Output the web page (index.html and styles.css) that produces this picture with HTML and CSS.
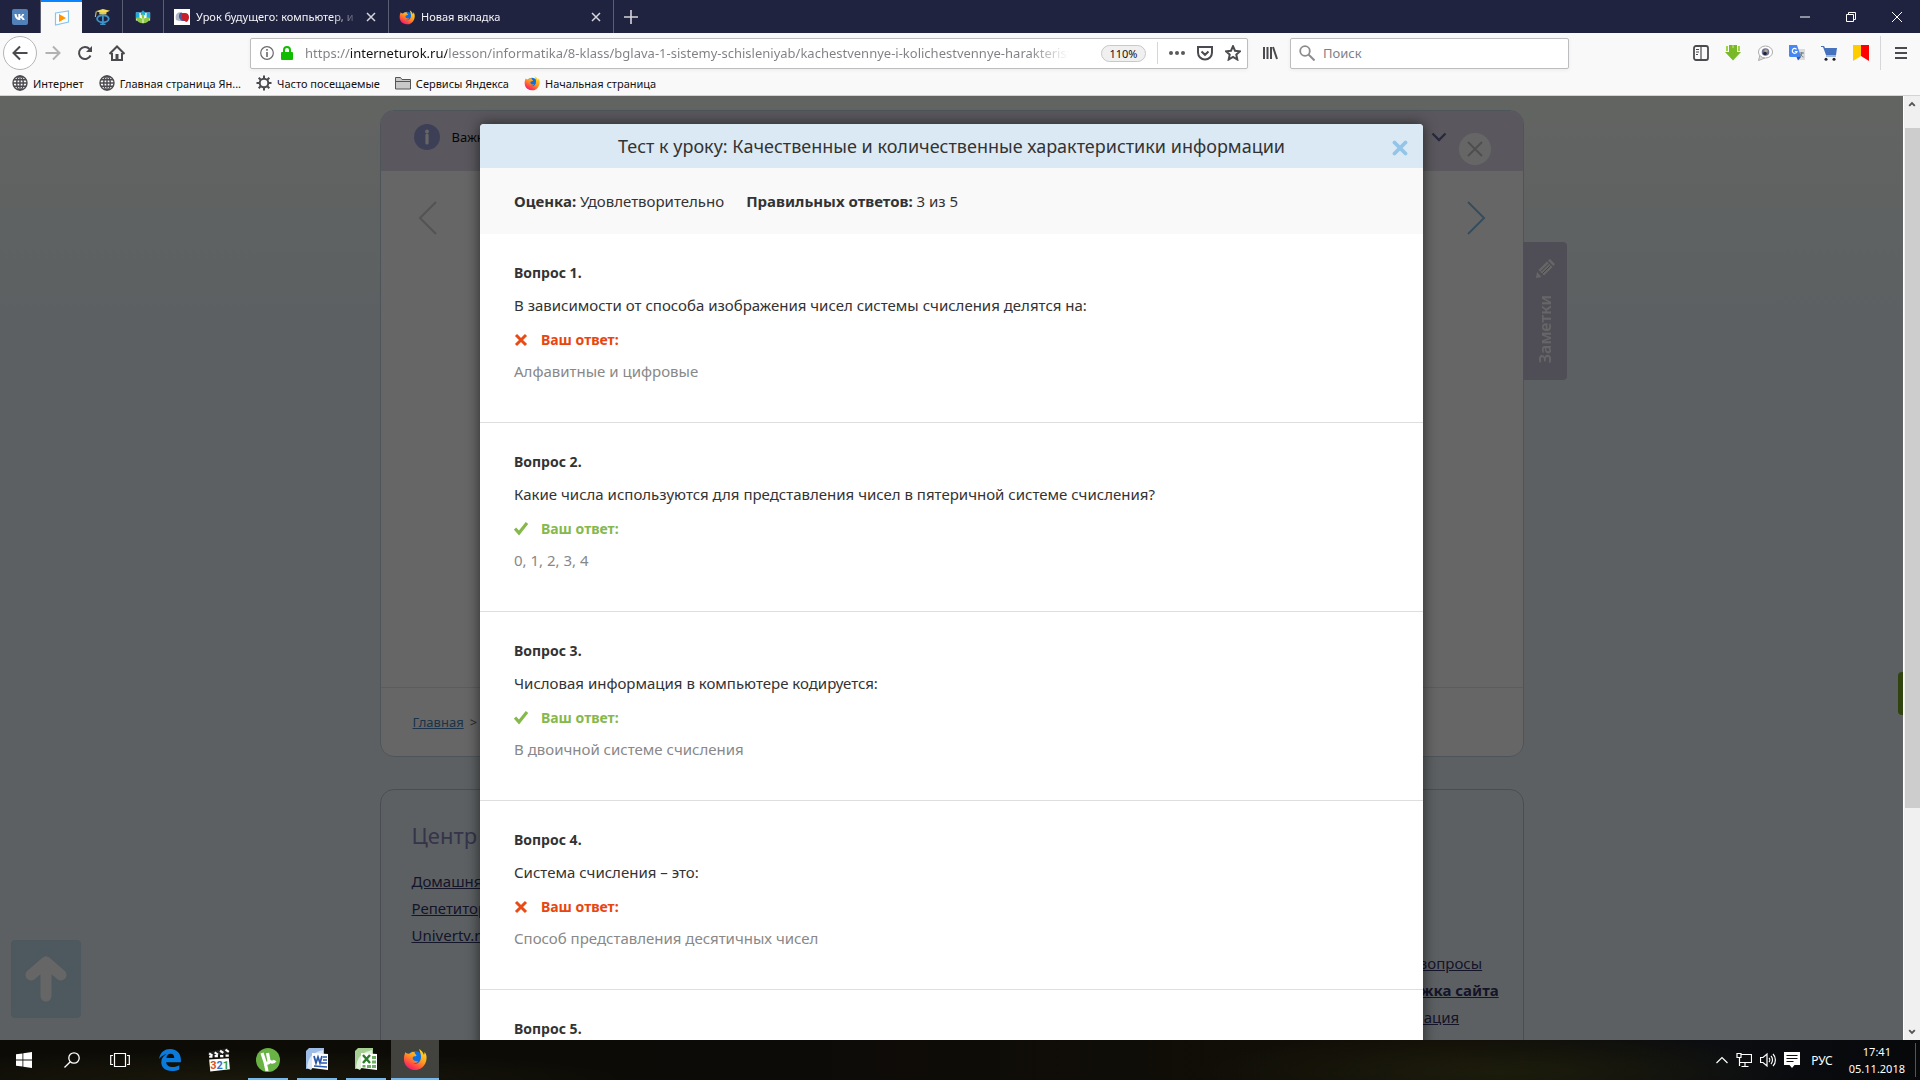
FILE: index.html
```html
<!DOCTYPE html>
<html lang="ru">
<head>
<meta charset="utf-8">
<title>Тест к уроку</title>
<link rel="stylesheet" href="styles.css">
</head>
<body>
<svg width="0" height="0" class="defs" aria-hidden="true">
  <defs>
    <linearGradient id="fxg" x1="0.8" y1="0" x2="0.2" y2="1"><stop offset="0" stop-color="#ffe226"/><stop offset=".45" stop-color="#ff9a1e"/><stop offset=".8" stop-color="#ff3a4e"/><stop offset="1" stop-color="#e31587"/></linearGradient>
    <symbol id="firefox" viewBox="0 0 24 24">
      <circle cx="12" cy="12.500" r="8.500" fill="#0a6fe0"/>
      <path d="M2.500 5c-3 7-1.500 13 3 16 6 4 14 2 17-5 2-5 1-9-1-11 0 1 0 2-.5 3-1-3-3-5-5-6 1 3 2 5 2 8 0 5-4 8-8 6.500 3 0 4.500-1 5-2.500-2 .5-3.500 0-4.500-1-1.500-1.500-1-3.500 1-3.800 1 0 2 0 2-1-.8-1-2-1.500-1.800-3-2-.5-4 .3-5 1.300C5 7 3 6.500 2.500 5z" fill="url(#fxg)"/>
    </symbol>
    <symbol id="globe" viewBox="0 0 16 16"><g fill="none" stroke="#4a4a4f" stroke-width="1.400"><circle cx="8" cy="8" r="7"/><ellipse cx="8" cy="8" rx="3.300" ry="7"/><path d="M8 1v14M1 8h14M2 4.800h12M2 11.200h12"/></g></symbol>
    <symbol id="cross" viewBox="0 0 14 14"><path d="M2 2l10 10M12 2L2 12" fill="none" stroke="#e94b16" stroke-width="3"/></symbol>
    <symbol id="tick" viewBox="0 0 14 14"><path d="M1 6.500l4 4.500L13 1" fill="none" stroke="#86b84c" stroke-width="3.200"/></symbol>
  </defs>
</svg>

<header class="browser">
  <div class="tabstrip">
    <button class="tab pinned" aria-label="VK"><svg viewBox="0 0 16 16" class="i16"><rect width="16" height="16" rx="2" fill="#5181b8"/><path d="M2.500 5h2c.2 2 1 3.300 1.800 3.700V5h2v2.300c1-.3 1.500-1.300 1.900-2.300h2c-.3 1.300-1.200 2.200-2 2.800.9.500 1.900 1.400 2.600 3.200h-2.200c-.4-1-1.200-1.800-2.300-2V11H8C5 11 2.700 9 2.500 5z" fill="#fff"/></svg></button>
    <button class="tab pinned active" aria-label="InternetUrok"><svg viewBox="0 0 16 16" class="i16"><path d="M1.500 3l13-2v11l-13 3z" fill="#fff" stroke="#86c5ef" stroke-width="1.200"/><path d="M5 4l7 4-7 4z" fill="#ff9500"/></svg></button>
    <button class="tab pinned" aria-label="Фоксфорд"><svg viewBox="0 0 18 18" class="i16"><path d="M10 6v12M7 17.200h6" stroke="#3e92c5" stroke-width="2"/><ellipse cx="10" cy="11" rx="6.500" ry="4" fill="none" stroke="#3e92c5" stroke-width="2.200"/><path d="M2 2.500L10 0l8 2-7 3z" fill="#f4dc55"/><path d="M6 3.500v2.500h8V3.500z" fill="#e6cf50"/><path d="M2.500 3L1.500 9" stroke="#d8c658" stroke-width="1.200"/></svg></button>
    <button class="tab pinned" aria-label="Якласс"><svg viewBox="0 0 18 16" class="i16"><path d="M1 3h16v9H1z" fill="#fff"/><path d="M1 3h4v6H1zM13 3h4v6h-4zM6.500 3L9 .500 11.500 3v3h-5z" fill="#1eacdd"/><path d="M1 9c4-1 6 0 8 2 2-2 4-3 8-2-1 4-4 6-8 6S2 13 1 9z" fill="#8fca43"/><path d="M9 4c-2 3-2 4 0 7 2-3 2-4 0-7z" fill="#8fca43"/><path d="M9 11v4" stroke="#fff"/></svg></button>
    <button class="tab"><svg viewBox="0 0 16 16" class="i16"><path fill="#fff" d="M0 0h16v16H0z"/><path d="M8 3C2 3 1 6 2 11c2 1 4 1 6 1z" fill="#b2b5c4"/><path d="M6 4c-2 3-1 6 2 8h3V4z" fill="#4757a0"/><path d="M8 5c3-2 7-1 7 3 0 2-1 5-3 5-1-2-4-1-4-4z" fill="#c8202a"/></svg><span class="tab-title">Урок будущего: компьютер, и</span><svg viewBox="0 0 10 10" class="tab-x"><path d="M1 1l8 8M9 1L1 9"/></svg></button>
    <button class="tab"><svg class="i16"><use href="#firefox"/></svg><span class="tab-title">Новая вкладка</span><svg viewBox="0 0 10 10" class="tab-x"><path d="M1 1l8 8M9 1L1 9"/></svg></button>
    <button class="newtab" aria-label="Открыть вкладку"><svg viewBox="0 0 14 14" class="i14"><path d="M7 0v14M0 7h14" stroke="#d5d5dc" stroke-width="1.600"/></svg></button>
    <div class="winctl">
      <button aria-label="Свернуть"><svg viewBox="0 0 10 10"><path d="M0 5h10"/></svg></button>
      <button aria-label="Окно"><svg viewBox="0 0 10 10"><path d="M.5 2.500h7v7h-7zM2.500 2.500v-2h7v7h-2"/></svg></button>
      <button aria-label="Закрыть"><svg viewBox="0 0 10 10"><path d="M0 0l10 10M10 0L0 10"/></svg></button>
    </div>
  </div>

  <div class="navbar">
    <button class="back" aria-label="Назад"><svg viewBox="0 0 16 16" class="i16 line"><path d="M15.500 8H1.500M8 1.500L1.500 8 8 14.500"/></svg></button>
    <button class="nav dim" aria-label="Вперёд"><svg viewBox="0 0 16 16" class="i16 line"><path d="M.5 8h14M8 1.500L14.500 8 8 14.500"/></svg></button>
    <button class="nav" aria-label="Обновить"><svg viewBox="0 0 16 16" class="i16 line"><path d="M13.500 10.500A6 6 0 1 1 12.500 4"/><path d="M15 1v6H9z" fill="#4a4a4f" stroke="none"/></svg></button>
    <button class="nav" aria-label="Домой"><svg viewBox="0 0 16 16" class="i16 line"><path d="M.5 9L8 1.500 15.500 9M3 8v7h10V8"/><path d="M6.500 9h3v6h-3z" fill="#4a4a4f" stroke="none"/></svg></button>
    <div class="urlbar">
      <svg viewBox="0 0 14 14" class="i14"><circle cx="7" cy="7" r="6.300" fill="none" stroke="#6a6a6e" stroke-width="1.200"/><path d="M7 6v5M7 3v1.800" stroke="#6a6a6e" stroke-width="1.600"/></svg>
      <svg viewBox="0 0 12 14" class="lock"><path d="M3 7V4a3 3 0 0 1 6 0v3" fill="none" stroke="#12bc00" stroke-width="2"/><rect y="6" width="12" height="8" rx="1" fill="#12bc00"/></svg>
      <input class="url" type="text" aria-label="Адрес" value="https://interneturok.ru/lesson/informatika/8-klass/bglava-1-sistemy-schisleniyab/kachestvennye-i-kolichestvennye-harakteristiki">
      <button class="zoom">110%</button>
      <span class="vsep"></span>
      <button class="nav" aria-label="Действия"><svg viewBox="0 0 16 16" class="i16"><g fill="#5a5a5e"><circle cx="2" cy="8" r="2"/><circle cx="8" cy="8" r="2"/><circle cx="14" cy="8" r="2"/></g></svg></button>
      <button class="nav" aria-label="Pocket"><svg viewBox="0 0 16 16" class="i16 line"><path d="M1 2h14v5.500a7 7 0 0 1-14 0zM4.500 6.500L8 9.800l3.500-3.300"/></svg></button>
      <button class="nav" aria-label="Закладка"><svg viewBox="0 0 16 16" class="i16 line"><path d="M8 1.200l2 4.500 5 .6-3.700 3.300 1 4.900L8 12l-4.300 2.500 1-4.900L1 6.300l5-.6z"/></svg></button>
    </div>
    <button class="nav" aria-label="Библиотека"><svg viewBox="0 0 16 16" class="i16 line"><path d="M2 2v12M5.500 2v12M9 2v12M11 2l4 12"/></svg></button>
    <label class="search"><svg viewBox="0 0 16 16" class="i16"><circle cx="6" cy="6" r="4.800" fill="none" stroke="#8c8c8c" stroke-width="1.800"/><path d="M9.500 9.500l6 6" stroke="#8c8c8c" stroke-width="2"/></svg><input type="text" placeholder="Поиск" aria-label="Поиск"></label>
    <div class="addons">
      <button aria-label="Боковая панель"><svg viewBox="0 0 16 16" class="i16"><rect x="1" y="1" width="14" height="14" rx="2" fill="none" stroke="#4a4a4f" stroke-width="1.800"/><path d="M8 1v14M3 4.500h3M3 7h3M3 9.500h2" stroke="#4a4a4f" stroke-width="1.200"/></svg></button>
      <button aria-label="Загрузки"><svg viewBox="0 0 16 16" class="i16"><path d="M4 0h8v7h4l-8 8.500L0 7h4z" fill="#79b928"/><path d="M1 1h2v5H1zM13 1h2v5h-2zM7 0h2v3H7z" fill="#9dd44a"/></svg></button>
      <button aria-label="Просмотр"><svg viewBox="0 0 16 16" class="i16"><path d="M3 10l-1.500 5.500L8 13" fill="#ddd" stroke="#aaa"/><ellipse cx="8.500" cy="7" rx="7" ry="6" fill="#fff" stroke="#aaa"/><circle cx="8.500" cy="7" r="3.800" fill="#6a7292"/><circle cx="9" cy="6" r="1.800" fill="#b8a08f"/><circle cx="8" cy="8.500" r="1.800" fill="#20253f"/></svg></button>
      <button aria-label="Переводчик"><svg viewBox="0 0 16 16" class="i16"><path d="M7 4h9v11H9z" fill="#dcdcdc"/><path d="M0 0h8l4 12H1.500A1.500 1.500 0 0 1 0 10.500z" fill="#4687f1"/><path d="M7.500 12h4.500L9 15.500z" fill="#2a55c7"/><path d="M7.500 4.300A2.400 2.400 0 1 0 8 6.500H5.800" fill="none" stroke="#fff" stroke-width="1.200"/><path d="M10.500 8h4.500M12.800 7v1c0 2-1 3-2 4M11.500 9c.5 1.500 1.500 2.500 3 3" fill="none" stroke="#697885"/></svg></button>
      <button aria-label="Корзина"><svg viewBox="0 0 16 16" class="i16"><path d="M0 1h3l1 2h12l-1 7H5L2 2H0z" fill="#4472bd"/><path d="M5 11h10" stroke="#4472bd"/><circle cx="5" cy="14.300" r="1.500" fill="#222"/><circle cx="13" cy="14.300" r="1.500" fill="#222"/></svg></button>
      <button aria-label="Закладки Яндекса"><svg viewBox="0 0 16 16" class="i16"><path d="M0 0h8v11l-8 5z" fill="#fc0"/><path d="M8 0h8v16l-8-5z" fill="#f00"/></svg></button>
    </div>
    <span class="vsep tall"></span>
    <button class="nav" aria-label="Меню"><svg viewBox="0 0 16 16" class="i16 line"><path d="M2 3h12M2 8h12M2 13h12"/></svg></button>
  </div>

  <nav class="bookmarks">
    <a href="#"><svg class="i16"><use href="#globe"/></svg>Интернет</a>
    <a href="#"><svg class="i16"><use href="#globe"/></svg>Главная страница Ян...</a>
    <a href="#"><svg viewBox="0 0 16 16" class="i16"><circle cx="8" cy="8" r="4.300" fill="none" stroke="#4a4a4f" stroke-width="2"/><path d="M8 .5v3M8 12.500v3M.5 8h3M12.500 8h3M2.700 2.700l2 2M11.300 11.300l2 2M13.300 2.700l-2 2M4.700 11.300l-2 2" stroke="#4a4a4f" stroke-width="2"/></svg>Часто посещаемые</a>
    <a href="#"><svg viewBox="0 0 16 16" class="i16"><path d="M.5 14V2.500h5L7 4.500h8.500V14z" fill="#c9c9c9" stroke="#555"/><path d="M1 6.500h14" stroke="#555"/></svg>Сервисы Яндекса</a>
    <a href="#"><svg class="i16"><use href="#firefox"/></svg>Начальная страница</a>
  </nav>
</header>

<main class="view">
  <div class="site">
    <div class="site-in">
      <section class="card">
        <div class="notice">
          <span class="info"><svg viewBox="0 0 26 26"><circle cx="13" cy="13" r="13" fill="#969dd6"/><path d="M13 11v8" stroke="#fff" stroke-width="3.200" stroke-linecap="round"/><circle cx="13" cy="7.500" r="1.900" fill="#fff"/></svg></span>
          <span class="notice-text">Важн</span>
          <svg viewBox="0 0 16 10" class="chev"><path d="M1.500 1.500L8 8l6.500-6.500" fill="none" stroke="#62669c" stroke-width="2.400"/></svg>
          <button class="round-x" aria-label="Скрыть"><svg viewBox="0 0 16 16" class="i16"><path d="M1 1l14 14M15 1L1 15" stroke="#c4c4c4" stroke-width="2"/></svg></button>
        </div>
        <div class="slider">
          <button class="arrow" aria-label="Назад"><svg viewBox="0 0 20 34"><path d="M18 1L2 17l16 16" stroke="#cfcfcf"/></svg></button>
          <button class="arrow" aria-label="Вперёд"><svg viewBox="0 0 20 34"><path d="M2 1l16 16L2 33" stroke="#86bfe6"/></svg></button>
        </div>
        <div class="crumbs"><a href="#">Главная</a><span>&gt;</span></div>
        <button class="notes"><svg viewBox="0 0 20 20"><path d="M1 19l1-6 4.500 5zM3.500 11L12 2.500l5.500 5.500L9 16.500zM13 1.500l2-1.500 5 5-1.500 2z" fill="#fff"/><path d="M6 12.500l8-8M7.500 14.500l8-8" stroke="#a9a7bd" stroke-width="1"/></svg><span>Заметки</span></button>
      </section>
      <footer class="foot">
        <div class="foot-col">
          <h2>Центр</h2>
          <a href="#">Домашняя школа</a>
          <a href="#">Репетиторы</a>
          <a href="#">Univertv.ru</a>
        </div>
        <div class="foot-col right">
          <a href="#">Частые вопросы</a>
          <a href="#" class="strong">Поддержка сайта</a>
          <a href="#">Информация</a>
        </div>
      </footer>
    </div>
    <button class="totop" aria-label="Наверх"><svg viewBox="0 0 42 46"><path d="M21 40V8M6 19L21 6l15 13" fill="none" stroke="#fff" stroke-width="11" stroke-linecap="round" stroke-linejoin="round"/></svg></button>
    <button class="side-tab" aria-label="Отзыв"></button>
  </div>

  <div class="overlay">
    <section class="modal" role="dialog" aria-labelledby="dlg">
      <div class="modal-head"><h1 id="dlg">Тест к уроку: Качественные и количественные характеристики информации</h1><button class="close" aria-label="Закрыть"><svg viewBox="0 0 16 16" class="i16"><path d="M2.500 2.500l11 11M13.500 2.500l-11 11" stroke="#93c5e8" stroke-width="3.800" stroke-linecap="round"/></svg></button></div>
      <div class="summary"><p><b>Оценка:</b> Удовлетворительно</p><p><b>Правильных ответов:</b> 3 из 5</p></div>
      <article class="q"><h3>Вопрос 1.</h3><p class="text">В зависимости от способа изображения чисел системы счисления делятся на:</p><p class="mark bad"><svg><use href="#cross"/></svg>Ваш ответ:</p><p class="reply">Алфавитные и цифровые</p></article>
      <article class="q"><h3>Вопрос 2.</h3><p class="text">Какие числа используются для представления чисел в пятеричной системе счисления?</p><p class="mark good"><svg><use href="#tick"/></svg>Ваш ответ:</p><p class="reply">0, 1, 2, 3, 4</p></article>
      <article class="q"><h3>Вопрос 3.</h3><p class="text">Числовая информация в компьютере кодируется:</p><p class="mark good"><svg><use href="#tick"/></svg>Ваш ответ:</p><p class="reply">В двоичной системе счисления</p></article>
      <article class="q"><h3>Вопрос 4.</h3><p class="text">Система счисления – это:</p><p class="mark bad"><svg><use href="#cross"/></svg>Ваш ответ:</p><p class="reply">Способ представления десятичных чисел</p></article>
      <article class="q"><h3>Вопрос 5.</h3></article>
    </section>
  </div>

  <div class="scroll" aria-hidden="true">
    <svg viewBox="0 0 17 17"><path d="M5.500 10l3-3 3 3" /></svg>
    <div class="track"><div class="thumb"></div></div>
    <svg viewBox="0 0 17 17"><path d="M5.500 7l3 3 3-3" /></svg>
  </div>
</main>

<footer class="taskbar">
  <button aria-label="Пуск"><svg viewBox="0 0 16 16" class="i16"><path d="M0 2.300l6.500-.9v6.100H0zM7.300 1.300L16 0v7.500H7.300zM0 8.500h6.500v6.100L0 13.700zM7.300 8.500H16V16l-8.700-1.300z" fill="#fff"/></svg></button>
  <button aria-label="Поиск"><svg viewBox="0 0 16 16" class="i16"><g fill="none" stroke="#fff" stroke-width="1.300"><circle cx="10" cy="6" r="5.200"/><path d="M6.300 9.700L.5 15.500"/></g></svg></button>
  <button aria-label="Представление задач"><svg viewBox="0 0 20 16" class="i20"><path d="M4.500 1.500h11v13h-11zM3 3.500H.7v9H3M17 3.500h2.300v9H17" fill="none" stroke="#fff" stroke-width="1.200"/></svg></button>
  <div class="apps">
    <button aria-label="Edge"><svg viewBox="-1 -1 22 22" class="i24"><path d="M0 9C1 3 5 0 10 0c6 0 10 4 10 10v2H6.500c.3 3 3 4.500 6 4.500 2.200 0 4.300-.6 6-1.600v3.700c-2 1-4.300 1.400-7 1.400-6 0-9.500-3.400-9.500-8 0-3.500 2-6 5-7.500C5 5 2.500 6 0 9zm6.700-.8h7.200c0-2.500-1.200-3.900-3.500-3.900-2 0-3.400 1.500-3.700 3.900z" fill="#0a7bdc"/></svg></button>
    <button aria-label="Media Player Classic"><svg viewBox="0 0 22 22" class="i24"><path d="M1 4l18-4 1 5L2 9z" fill="#222"/><path d="M2 5l3 2M7 4l3 2M12 2.500l3 2M17 1.500l3 2M2 8h3M7 7.500h3M12 7.500h3M17 7h3" stroke="#fff" stroke-width="2"/><path d="M2 10.500l18-1 1 10-18 2z" fill="#fff"/><text x="3" y="19" font-size="10" font-weight="700" font-family="Roboto, sans-serif"><tspan fill="#d4541d">3</tspan><tspan fill="#3477c9">2</tspan><tspan fill="#3a9b3b">1</tspan></text></svg></button>
    <button class="open" aria-label="uTorrent"><svg viewBox="0 0 24 24" class="i24"><circle cx="12" cy="12" r="12" fill="#69b345"/><path d="M6 5l3 9c.7 2 4.300 1.500 4-1l-1.500-8M13.500 12.500c1 2.500 4.500 2 5.500 0M9 14l2 9" fill="none" stroke="#fff" stroke-width="3.200"/></svg></button>
    <button class="open" aria-label="Word"><svg viewBox="0 0 24 24" class="i24"><path d="M1 3l3-3h15v18L1 21z" fill="#9dbce6"/><path d="M2 20C3 10 6 5 18 2v3L6 22z" fill="#d9e6f7"/><path d="M7 5l16 1v16L7 20z" fill="#fff"/><path d="M9 8l2 7 2-6 2 6 2-7" fill="none" stroke="#2c5aa8" stroke-width="1.800"/><path d="M18 9h4M18 12h4M16 15h6M9 18l13 1" stroke="#2c5aa8" stroke-width="1.400"/></svg></button>
    <button class="open" aria-label="Excel"><svg viewBox="0 0 24 24" class="i24"><path d="M1 3l3-3h15v18L1 21z" fill="#a5cf93"/><path d="M2 20C3 10 6 5 18 2v3L6 22z" fill="#e0f0d9"/><path d="M7 5l16 1v16L7 20z" fill="#fff"/><path d="M9 7l7 8M16 7l-7 8" fill="none" stroke="#2b7d2c" stroke-width="2.400"/><path d="M18 8h4v3h-4zM18 12.500h4v3h-4zM18 17h4v3h-4zM13 17h4v3h-4zM8.500 17h3v2.500h-3z" fill="#6fad63"/></svg></button>
    <button class="open current" aria-label="Firefox"><svg class="i24"><use href="#firefox"/></svg></button>
  </div>
  <div class="tray">
    <svg viewBox="0 0 12 16" class="t12"><path d="M.5 11L6 5.500l5.500 5.500"/></svg>
    <svg viewBox="0 0 16 16" class="i16"><path d="M5 2.500h10.500v8H3.500V6M1 1.500h4v4H1zM3.500 5v9M9 10.500v4M5.500 14.500h7"/></svg>
    <svg viewBox="0 0 16 16" class="i16"><path d="M.5 5.500H3L7 2v12l-4-3.500H.5zM9 6c1 1 1 3 0 4M11 4c2 2 2 6 0 8M13 2c3.200 3 3.200 9 0 12"/></svg>
    <svg viewBox="0 0 16 16" class="i16"><path d="M0 0h16v13h-5.500L8 16l-2.500-3H0z" fill="#fff" stroke="none"/><path d="M2.500 3.500h11M2.500 6.500h11M2.500 9.500h7" class="ink"/></svg>
    <span class="lang">РУС</span>
    <div class="clock"><span>17:41</span><span>05.11.2018</span></div>
  </div>
</footer>
</body>
</html>
```
FILE: styles.css
```css
* { box-sizing: border-box; }
html, body { height: 100%; }
body { margin: 0; display: flex; flex-direction: column; overflow: hidden; font-family: "Noto Sans", sans-serif; font-size: 12px; color: #111; }
button { border: 0; padding: 0; background: none; font: inherit; color: inherit; display: flex; align-items: center; justify-content: center; flex: none; }
input { border: 0; outline: 0; padding: 0; background: none; font: inherit; min-width: 0; }
h1, h2, h3, p { margin: 0; }
svg { flex: none; display: block; }
.defs { position: absolute; }
.i14 { width: 14px; height: 14px; }
.i16 { width: 16px; height: 16px; }
.i20 { width: 20px; height: 16px; }
.i24 { width: 24px; height: 24px; }
.line { fill: none; stroke: #4a4a4f; stroke-width: 2; }

/* browser chrome */
.browser { flex: none; background: #f9f9fa; border-bottom: 1px solid #d4d4d6; }
.tabstrip { display: flex; height: 33px; background: #202340; color: #f4f4f8; }
.tab { width: 225px; padding: 0 12px 0 10px; gap: 6px; border-right: 1px solid #5c5e74; }
.tab.pinned { width: 41px; padding: 0 12px; }
.tab.active { background: #f9f9fa; border-top: 2px solid #0a84ff; border-right: 0; }
.tab-title { flex: 1; min-width: 0; overflow: hidden; white-space: nowrap; text-align: left; font-size: 11px; -webkit-mask-image: linear-gradient(90deg, #000 calc(100% - 28px), transparent); mask-image: linear-gradient(90deg, #000 calc(100% - 28px), transparent); }
.tab-x { width: 10px; height: 10px; stroke: #d5d5dc; stroke-width: 1.500; }
.newtab { width: 34px; }
.winctl { margin-left: auto; display: flex; }
.winctl button { width: 46px; }
.winctl svg { width: 10px; height: 10px; fill: none; stroke: #fff; stroke-width: 1; }

.navbar { display: flex; align-items: center; height: 40px; padding: 0 3px; }
.back { width: 34px; height: 34px; border: 1px solid #b5b5b8; border-radius: 50%; background: #fff; }
.nav { width: 32px; height: 30px; }
.dim { opacity: .4; }
.urlbar { flex: 1; display: flex; align-items: center; height: 31px; margin: 0 6px 0 117px; padding: 0 0 0 9px; border: 1px solid #bdbdc0; border-radius: 2px; background: #fff; box-shadow: 0 1px 4px rgba(0,0,0,.06); }
.lock { width: 12px; height: 14px; margin-left: 7px; }
.url { flex: 1; margin: 0 32px 0 12px; font-size: 13px; color: transparent; background: linear-gradient(90deg, #7f7f84 46px, #111 46px 142px, #7f7f84 142px calc(100% - 40px), transparent); -webkit-background-clip: text; background-clip: text; }
.urlbar .nav { width: 28px; }
.zoom { width: 45px; height: 17px; border: 1px solid #c8c8ca; border-radius: 9px; background: #f0f0f1; font-size: 11px; }
.vsep { width: 1px; height: 22px; margin: 0 5px 0 11px; background: #d7d7db; }
.vsep.tall { height: 34px; margin: 0 4px 0 11px; }
.search { display: flex; align-items: center; gap: 8px; width: 279px; height: 31px; margin-left: 4px; padding: 0 8px; border: 1px solid #bdbdc0; border-radius: 2px; background: #fff; box-shadow: 0 1px 4px rgba(0,0,0,.06); }
.search input { font-size: 13px; }
.search input::placeholder { color: #808084; opacity: 1; }
.addons { display: flex; gap: 16px; margin-left: 124px; }
.bookmarks { display: flex; height: 22px; align-items: center; gap: 15px; padding: 0 12px 2px; font-size: 11px; }
.bookmarks a { display: flex; align-items: center; gap: 5px; color: #111; text-decoration: none; white-space: nowrap; }

/* page under the dialog */
.view { position: relative; flex: 1; min-height: 0; overflow: hidden; display: flex; }
.site { position: relative; flex: 1; min-width: 0; background: linear-gradient(#f6faf4, #e8f1f6 220px, #e7f1f6); }
.site-in { max-width: 1144px; margin: 0 auto; padding-top: 14px; }
.card { position: relative; border: 1px solid #c3d5e2; border-radius: 14px; background: #fff; }
.notice { display: flex; align-items: center; height: 60px; padding: 0 32px 8px 33px; border-radius: 13px 13px 0 0; background: #e1dceb; font-size: 13px; }
.info svg { width: 26px; height: 26px; }
.notice-text { margin-left: 12px; }
.chev { width: 16px; height: 10px; margin-left: auto; margin-right: 12px; }
.round-x { width: 32px; height: 32px; margin-top: 24px; border-radius: 50%; background: #fff; }
.slider { display: flex; justify-content: space-between; align-items: flex-start; height: 517px; padding: 30px 37px; border-bottom: 1px solid #e6e6e6; }
.arrow svg { width: 20px; height: 34px; fill: none; stroke-width: 2; }
.crumbs { display: flex; gap: 6px; align-items: center; height: 68px; padding: 0 32px; font-size: 13px; color: #666; }
.crumbs a { color: #4680b6; }
.notes { position: absolute; left: 100%; top: 131px; width: 44px; height: 138px; flex-direction: column; gap: 16px; border-radius: 0 4px 4px 0; background: #c6c3da; }
.notes svg { width: 20px; height: 20px; }
.notes span { writing-mode: vertical-rl; transform: rotate(180deg); font-size: 16px; font-weight: 600; color: #fff; }
.foot { display: flex; justify-content: space-between; margin-top: 32px; height: 400px; padding: 28px 0 0 31px; border: 1px solid #b9c0d0; border-radius: 14px; }
.foot-col { display: flex; flex-direction: column; align-items: flex-start; font-size: 15px; line-height: 27px; }
.foot-col.right { width: 160px; padding-top: 132px; }
.foot-col h2 { font-size: 22px; font-weight: 400; line-height: 34px; margin-bottom: 16px; color: #8582b9; }
.foot-col a { color: #35356a; white-space: nowrap; }
.strong { font-weight: 700; }
.totop { position: absolute; left: 11px; bottom: 22px; width: 70px; height: 78px; border-radius: 4px; background: #c1dbed; }
.totop svg { width: 42px; height: 46px; }
.side-tab { position: absolute; right: 0; top: 576px; width: 5px; height: 43px; border-radius: 4px 0 0 4px; background: #76a726; }

/* test results dialog */
.overlay { position: absolute; inset: 0 17px 0 0; padding-top: 28px; background: rgba(0,0,0,.6); color: #333; }
.modal { max-width: 943px; margin: 0 auto; background: #fff; border-radius: 4px 4px 0 0; box-shadow: 0 0 14px rgba(0,0,0,.6); }
.modal-head { display: flex; align-items: center; height: 44px; padding: 0 15px 0 31px; background: #dbe9f4; border-radius: 4px 4px 0 0; }
.modal-head h1 { flex: 1; font-size: 18px; font-weight: 400; text-align: center; }
.close { padding-top: 4px; }
.summary { display: flex; align-items: center; gap: 22px; height: 66px; padding: 0 34px; background: #f9f9f9; font-size: 15px; }
.q { padding: 29px 34px 41px; border-bottom: 1px solid #dedede; font-size: 15px; line-height: 20px; }
.q h3 { font-size: 14px; }
.text { margin: 12px 0 15px; }
.mark { display: flex; align-items: center; gap: 13px; font-size: 14px; font-weight: 700; }
.mark svg { width: 14px; height: 14px; }
.bad { color: #e8450f; }
.good { color: #86b84c; }
.reply { margin-top: 11px; color: #888; }

.scroll { width: 17px; display: flex; flex-direction: column; background: #f0f0f0; border-left: 1px solid #fff; }
.scroll svg { width: 16px; height: 17px; fill: none; stroke: #555; stroke-width: 2; }
.track { flex: 1; padding: 15px 0 0 1px; }
.thumb { height: 76%; background: #cdcdcd; }

/* taskbar */
.taskbar { flex: none; display: flex; height: 40px; color: #fff; background: radial-gradient(ellipse 300px 40px at 78% 80%, #1c1c0c, transparent), radial-gradient(ellipse 400px 30px at 12% 100%, #1a180b, transparent), linear-gradient(90deg, #0c0b06, #0d0b07 40%, #120f07 75%, #0b0d11 90%, #07080a); }
.taskbar button { width: 48px; }
.apps { display: flex; gap: 1px; margin-left: 2px; }
.taskbar .open { background: linear-gradient(#76b9ed, #76b9ed) bottom / 40px 2px no-repeat; }
.taskbar .current { background: #42423e; border-bottom: 2px solid #76b9ed; }
.tray { margin-left: auto; display: flex; align-items: center; gap: 8px; padding-right: 4px; }
.tray svg { fill: none; stroke: #fff; stroke-width: 1.200; }
.tray .ink { stroke: #111; }
.t12 { width: 12px; height: 16px; }
.lang { margin: 0 8px 0 3px; font-size: 12px; }
.clock { display: flex; flex-direction: column; align-items: center; line-height: 17px; font-size: 11px; padding-right: 10px; border-right: 1px solid #555; }
```
